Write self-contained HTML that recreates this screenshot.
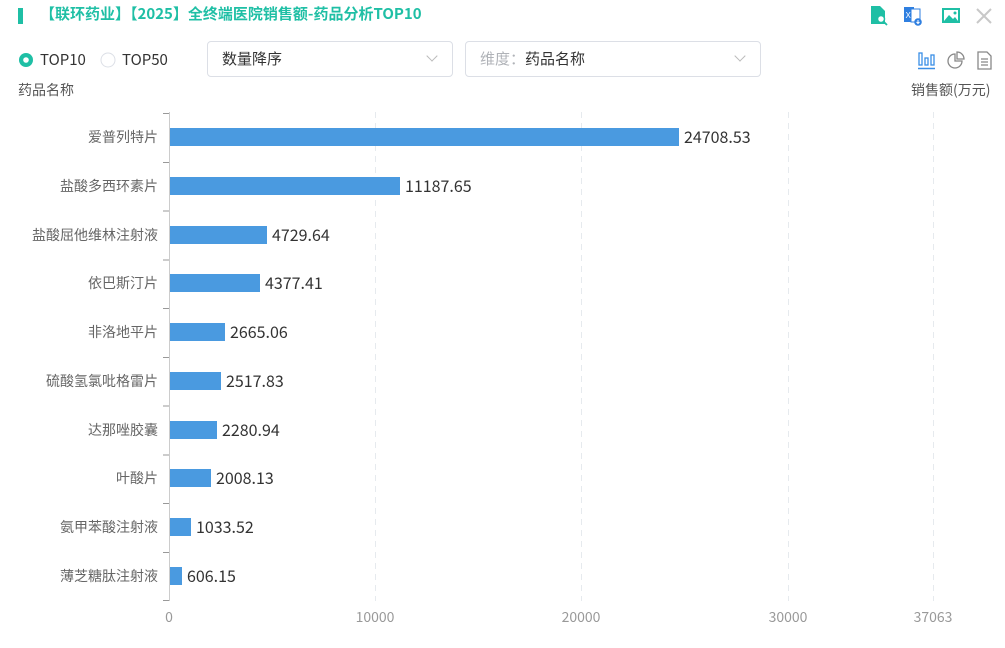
<!DOCTYPE html>
<html><head><meta charset="utf-8"><style>
*{margin:0;padding:0;box-sizing:border-box}
body{width:1005px;height:648px;background:#fff;font-family:"Noto Sans CJK SC","Liberation Sans",sans-serif;position:relative;overflow:hidden;color:#333}
.abs{position:absolute;line-height:1.2}
.title{left:40px;top:5px;font-size:15px;font-weight:bold;color:#1fbfa5;white-space:nowrap}
.bar0{left:18px;top:8px;width:5px;height:16px;background:#1fbfa5}
.sel{border:1px solid #dcdfe6;border-radius:4px;height:36px;font-size:15px;line-height:34px;padding-left:14px}
.chev{position:absolute;right:16px;top:10px;width:8px;height:8px;border-right:1px solid #bbb;border-bottom:1px solid #bbb;transform:rotate(45deg)}
</style></head><body>
<div class="abs bar0"></div>
<div class="abs title">【联环药业】【2025】全终端医院销售额-药品分析TOP10</div>

<svg class="abs" style="left:868px;top:4px" width="130" height="22" viewBox="0 0 130 22">
<path d="M3 2h9l5 5v13H3z" fill="#1fbfa5"/><circle cx="13" cy="15" r="3.5" fill="#fff" stroke="#1fbfa5" stroke-width="1.5"/><line x1="15.5" y1="17.5" x2="19" y2="21" stroke="#1fbfa5" stroke-width="1.8"/>
<rect x="36" y="3" width="10" height="15" fill="#2f7fe0"/><rect x="43" y="5" width="9" height="13" fill="#fff" stroke="#2f7fe0"/><text x="37.5" y="14" font-size="8" fill="#fff" font-family="Liberation Sans">X</text><circle cx="50" cy="18" r="3.8" fill="#2f7fe0"/><path d="M50 16v3.5M48.5 18l1.5 1.5 1.5-1.5" stroke="#fff" fill="none" stroke-width="1"/>
<rect x="74" y="4" width="18" height="15" fill="#1fbfa5"/><rect x="76" y="6" width="14" height="11" fill="#fff"/><path d="M76 17l5-6 4 4 2-2 3 4z" fill="#1fbfa5"/><circle cx="87" cy="9" r="1.5" fill="#1fbfa5"/>
<path d="M109 5l14 14M123 5l-14 14" stroke="#c8c8c8" stroke-width="2"/>
</svg>

<svg class="abs" style="left:18px;top:52px" width="16" height="16"><circle cx="8" cy="8" r="7" fill="#1fbfa5"/><circle cx="8" cy="8" r="2.8" fill="#fff"/></svg>
<div class="abs" style="left:40px;top:51px;font-size:15px">TOP10</div>
<svg class="abs" style="left:100px;top:52px" width="16" height="16"><circle cx="8" cy="8" r="7" fill="#fff" stroke="#dcdfe6"/></svg>
<div class="abs" style="left:122px;top:51px;font-size:15px">TOP50</div>

<div class="abs sel" style="left:207px;top:41px;width:246px">数量降序<span class="chev"></span></div>
<div class="abs sel" style="left:465px;top:41px;width:296px"><span style="color:#b0b3b8">维度：</span>药品名称<span class="chev"></span></div>

<svg class="abs" style="left:916px;top:50px" width="80" height="22">
<g fill="none" stroke="#3a8ee6" stroke-width="1.3"><rect x="3" y="3" width="3" height="12"/><rect x="9" y="8" width="3" height="7"/><rect x="15" y="5" width="3" height="10"/></g><line x1="2" y1="18.5" x2="19" y2="18.5" stroke="#3a8ee6" stroke-width="1.5"/>
<g fill="none" stroke="#888" stroke-width="1.3"><path d="M39 4a7 7 0 1 0 7 7h-7z"/><path d="M41 2v7h7a7 7 0 0 0-7-7z"/>
<path d="M62 2h9l4 4v13H62z"/><path d="M65 9h7M65 12h7M65 15h7"/></g>
</svg>

<div class="abs" style="left:18px;top:82px;font-size:14px;color:#555">药品名称</div>
<div class="abs" style="left:911px;top:82px;font-size:14px;color:#555">销售额(万元)</div>

<svg class="abs" style="left:0;top:0" width="1005" height="648" font-family="Noto Sans CJK SC,Liberation Sans,sans-serif">
<g stroke="#e6eaee" stroke-dasharray="6 5" stroke-width="1">
<line x1="375.5" y1="112" x2="375.5" y2="601"/><line x1="581.5" y1="112" x2="581.5" y2="601"/><line x1="788.5" y1="112" x2="788.5" y2="601"/><line x1="933.5" y1="112" x2="933.5" y2="601"/>
</g>
<line x1="169.5" y1="112" x2="169.5" y2="601" stroke="#ccc"/>
<g stroke="#999">
<line x1="163" y1="113.5" x2="169" y2="113.5"/><line x1="163" y1="162.5" x2="169" y2="162.5"/><line x1="163" y1="211" x2="169" y2="211"/><line x1="163" y1="260" x2="169" y2="260"/><line x1="163" y1="308.5" x2="169" y2="308.5"/><line x1="163" y1="357.5" x2="169" y2="357.5"/><line x1="163" y1="406" x2="169" y2="406"/><line x1="163" y1="455" x2="169" y2="455"/><line x1="163" y1="503.5" x2="169" y2="503.5"/><line x1="163" y1="552.5" x2="169" y2="552.5"/><line x1="163" y1="600.5" x2="169" y2="600.5"/>
</g>
<g fill="#4a9ae0">
<rect x="170" y="128" width="509" height="18"/>
<rect x="170" y="177" width="230" height="18"/>
<rect x="170" y="226" width="97" height="18"/>
<rect x="170" y="274" width="90" height="18"/>
<rect x="170" y="323" width="55" height="18"/>
<rect x="170" y="372" width="51" height="18"/>
<rect x="170" y="421" width="47" height="18"/>
<rect x="170" y="469" width="41" height="18"/>
<rect x="170" y="518" width="21" height="18"/>
<rect x="170" y="567" width="12" height="18"/>
</g>
<g font-size="16" fill="#333">
<text x="684" y="143">24708.53</text>
<text x="405" y="192">11187.65</text>
<text x="272" y="241">4729.64</text>
<text x="265" y="289">4377.41</text>
<text x="230" y="338">2665.06</text>
<text x="226" y="387">2517.83</text>
<text x="222" y="436">2280.94</text>
<text x="216" y="484">2008.13</text>
<text x="196" y="533">1033.52</text>
<text x="187" y="582">606.15</text>
</g>
<g font-size="14" fill="#666" text-anchor="end">
<text x="158" y="142">爱普列特片</text>
<text x="158" y="191">盐酸多西环素片</text>
<text x="158" y="240">盐酸屈他维林注射液</text>
<text x="158" y="288">依巴斯汀片</text>
<text x="158" y="337">非洛地平片</text>
<text x="158" y="386">硫酸氢氯吡格雷片</text>
<text x="158" y="435">达那唑胶囊</text>
<text x="158" y="483">叶酸片</text>
<text x="158" y="532">氨甲苯酸注射液</text>
<text x="158" y="581">薄芝糖肽注射液</text>
</g>
<g font-size="14" fill="#999" text-anchor="middle">
<text x="169" y="622">0</text><text x="375" y="622">10000</text><text x="581" y="622">20000</text><text x="788" y="622">30000</text><text x="933" y="622">37063</text>
</g>
</svg>
</body></html>
